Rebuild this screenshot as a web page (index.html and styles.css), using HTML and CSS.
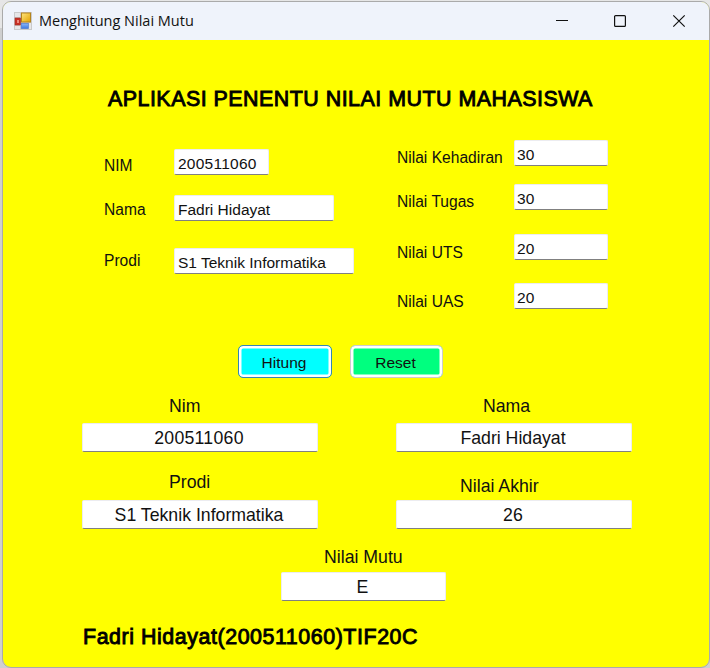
FILE: index.html
```html
<!DOCTYPE html>
<html lang="id">
<head>
<meta charset="utf-8">
<title>Menghitung Nilai Mutu</title>
<link rel="stylesheet" href="styles.css">
</head>
<body>
<div class="window">
  <header class="titlebar">
    <svg class="app-icon" width="18" height="18" viewBox="0 0 18 18">
      <defs>
        <linearGradient id="gold" x1="0" y1="0" x2="1" y2="1"><stop offset="0" stop-color="#ffe680"/><stop offset="1" stop-color="#e3a200"/></linearGradient>
        <linearGradient id="blue" x1="0" y1="0" x2="0" y2="1"><stop offset="0" stop-color="#8ab6f8"/><stop offset="1" stop-color="#3d78e0"/></linearGradient>
      </defs>
      <rect width="18" height="18" fill="#c9c9cb"/>
      <path d="M1 1h5v4H1zM1 14h5v3H1zM15 11h2v6h-2z" fill="#e6e6e8"/>
      <rect x="7.5" y="1" width="9" height="9" fill="url(#gold)" stroke="#b5841c"/>
      <rect x="1" y="6" width="5.5" height="7" fill="#c62f25" stroke="#a32820" stroke-width=".6"/>
      <rect x="3" y="8" width="2" height="3" fill="#ed8a7e"/>
      <rect x="7.3" y="11.5" width="7" height="5" fill="url(#blue)" stroke="#4d7ed4" stroke-width=".7"/>
    </svg>
    <span class="caption">Menghitung Nilai Mutu</span>
    <svg class="controls" width="132" height="14" viewBox="0 0 132 14" fill="none" stroke="#111" stroke-width="1.2">
      <path d="M1 6.5h12"/>
      <rect x="59.6" y="1.6" width="10.8" height="10.8" rx="1"/>
      <path d="M118.3 1.3l11.4 11.4M129.7 1.3l-11.4 11.4"/>
    </svg>
  </header>
  <main class="client">
    <h1 class="heading">APLIKASI PENENTU NILAI MUTU MAHASISWA</h1>
    <section class="form">
      <div class="identity">
        <div class="row nim"><label>NIM</label><div class="box digits">200511060</div></div>
        <div class="row nama"><label>Nama</label><div class="box">Fadri Hidayat</div></div>
        <div class="row prodi"><label>Prodi</label><div class="box">S1 Teknik Informatika</div></div>
      </div>
      <div class="scores">
        <div class="row hadir"><label>Nilai Kehadiran</label><div class="box digits">30</div></div>
        <div class="row tugas"><label>Nilai Tugas</label><div class="box digits">30</div></div>
        <div class="row uts"><label>Nilai UTS</label><div class="box digits">20</div></div>
        <div class="row uas"><label>Nilai UAS</label><div class="box digits">20</div></div>
      </div>
    </section>
    <div class="actions">
      <button class="btn calc">Hitung</button>
      <button class="btn reset">Reset</button>
    </div>
    <section class="results">
      <div class="result r-nim"><label>Nim</label><div class="box digits">200511060</div></div>
      <div class="result r-nama"><label>Nama</label><div class="box">Fadri Hidayat</div></div>
      <div class="result r-prodi"><label>Prodi</label><div class="box">S1 Teknik Informatika</div></div>
      <div class="result r-akhir"><label>Nilai Akhir</label><div class="box digits">26</div></div>
    </section>
    <div class="result grade"><label>Nilai Mutu</label><div class="box">E</div></div>
    <footer class="author">Fadri Hidayat(200511060)TIF20C</footer>
  </main>
</div>
</body>
</html>
```
FILE: styles.css
```css
* { box-sizing: border-box; }
body {
  margin: 0;
  padding: 1px 0 0 2px;
  height: 668px;
  overflow: hidden;
  background: linear-gradient(#e6e6e6 0 28px, #cfcfcf 28px);
  font-family: "Liberation Sans", Arial, sans-serif;
  color: #111;
}
.window {
  width: 708px;
  height: 667px;
  border: 1px solid #aaa;
  border-radius: 9px;
  overflow: hidden;
  background: #ff0;
  background-clip: padding-box;
}
.titlebar {
  height: 38px;
  display: flex;
  align-items: center;
  padding: 0 22px 0 11px;
  background: #eff3fb;
}
.caption {
  margin-left: 7px;
  font: 14.5px/20px "Open Sans", "Noto Sans", sans-serif;
  white-space: nowrap;
}
.controls { margin-left: auto; }
.heading {
  margin: 46px 0 0 105px;
  font-size: 21.4px;
  letter-spacing: .5px;
  line-height: 26px;
  font-weight: normal;
  color: #000;
  -webkit-text-stroke: .9px #000;
  white-space: nowrap;
}
.form {
  display: flex;
  height: 233px;
  font-size: 15.6px;
  line-height: 20px;
}
.identity { width: 293px; margin-left: 101px; padding-top: 37px; }
.scores { padding-top: 28px; }
.row { display: flex; align-items: flex-start; height: 27px; white-space: nowrap; }
.identity label { width: 71px; }
.scores label { width: 117px; }
.box {
  background: #fff;
  border: 1px solid #ececf0;
  border-bottom-color: #808080;
  border-radius: 2px;
  white-space: nowrap;
}
.row .box { width: 94px; height: 26px; padding: 4px 0 0 2px; font-size: 15.5px; }
.identity .box { width: 95px; margin-left: -1px; padding-left: 3px; }
.digits { letter-spacing: .25px; }
.nim { margin-bottom: 19px; }
.nim label { padding-top: 7px; }
.nama { margin-bottom: 26px; }
.nama label { padding-top: 5px; }
.nama .box { width: 160px; }
.prodi label { padding-top: 3px; }
.prodi .box { width: 180px; }
.hadir { margin-bottom: 17px; }
.tugas { margin-bottom: 23px; }
.uts { margin-bottom: 22px; }
.hadir label, .tugas label { padding-top: 8px; }
.uts label, .uas label { padding-top: 9px; }
.actions { display: flex; gap: 18px; margin-left: 235px; }
.btn {
  width: 94px;
  height: 33px;
  padding: 2px 2px 0 0;
  border: 1px solid #ccc;
  border-radius: 5px;
  box-shadow: inset 0 0 0 2.5px #fff;
  font: 15.5px/20px "Liberation Sans", Arial, sans-serif;
  color: #111;
}
.calc { background: #0ff; border-color: #3386b4; }
.reset { background: #00ff7f; width: 93px; }
.results {
  display: grid;
  grid-template-columns: 236px 236px;
  column-gap: 78px;
  margin: 17px 0 0 79px;
}
.result { font-size: 17.7px; line-height: 22px; }
.result label { display: block; white-space: nowrap; }
.result .box { height: 29px; padding: 3px 2px 0 0; text-align: center; }
.results .result { height: 57px; }
.r-nim label, .r-nama label { margin-bottom: 6px; }
.r-nim label, .r-prodi label { padding-left: 87px; }
.r-nama label { padding-left: 87px; }
.r-akhir label { padding-left: 64px; margin-bottom: 3px; }
.results .r-prodi, .results .r-akhir { margin-top: 19px; height: 59px; }
.r-prodi label { margin-bottom: 7px; }
.r-akhir { padding-top: 4px; }
.grade { width: 165px; margin: 16px 0 0 278px; }
.grade label { padding-left: 43px; margin-bottom: 4px; }
.author {
  margin: 23px 0 0 80px;
  font-size: 21.4px;
  letter-spacing: .56px;
  line-height: 26px;
  color: #000;
  -webkit-text-stroke: .9px #000;
  white-space: nowrap;
}
```
